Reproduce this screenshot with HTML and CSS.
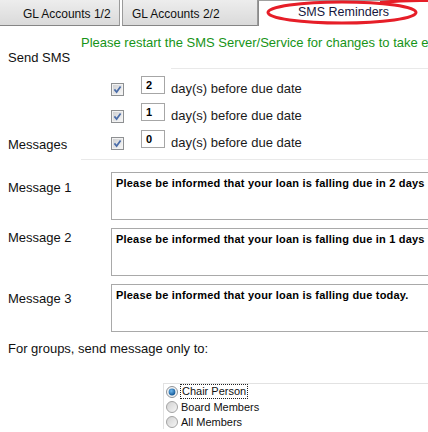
FILE: index.html
```html
<!DOCTYPE html>
<html lang="en">
<head>
<meta charset="UTF-8">
<meta name="viewport" content="width=device-width, initial-scale=1.0">
<title>SMS Reminders</title>
<link rel="stylesheet" href="styles.css">
</head>
<body>

<div class="tabs">
    <div class="tab tab-first">GL Accounts 1/2</div>
    <div class="tab tab-second">GL Accounts 2/2</div>
    <div class="tab tab-active">SMS Reminders</div>
    <!-- red marker drawn round the active tab -->
    <svg class="marker" width="166" height="27" viewBox="0 0 166 27">
        <ellipse cx="80" cy="12.5" rx="74" ry="10.5" fill="none" stroke="#e61e28" stroke-width="3"/>
        <path d="M118 2.5 Q142 0 166 0.5" fill="none" stroke="#e61e28" stroke-width="3"/>
    </svg>
</div>

<div class="notice">Please restart the SMS Server/Service for changes to take effect</div>

<div class="send-label">Send SMS</div>
<div class="rule rule-top"></div>

<div class="days">
    <div class="day-row">
        <div class="row-label"></div>
        <svg class="check" width="13" height="13" viewBox="0 0 13 13">
            <defs>
                <linearGradient id="boxFill" x1="0" y1="0" x2="1" y2="1">
                    <stop offset="0" stop-color="#cfd0d2"/>
                    <stop offset="1" stop-color="#f6f6f6"/>
                </linearGradient>
                <linearGradient id="radioFill" x1="0" y1="0" x2="1" y2="1">
                    <stop offset="0" stop-color="#cfcfcf"/>
                    <stop offset="1" stop-color="#f7f7f7"/>
                </linearGradient>
                <radialGradient id="dotFill" cx="0.4" cy="0.35" r="0.7">
                    <stop offset="0" stop-color="#6fb8ee"/>
                    <stop offset="1" stop-color="#0b4f8e"/>
                </radialGradient>
            </defs>
            <rect x="0.5" y="0.5" width="12" height="12" fill="#f2f2f2" stroke="#8e9092"/>
            <rect x="2" y="2" width="9" height="9" fill="url(#boxFill)"/>
            <path d="M3.4 6.4 L5.6 9 L9.6 3.4" fill="none" stroke="#4a6ca8" stroke-width="1.7"/>
        </svg>
        <input class="num" type="text" value="2">
        <span class="day-text">day(s) before due date</span>
    </div>
    <div class="day-row">
        <div class="row-label"></div>
        <svg class="check" width="13" height="13" viewBox="0 0 13 13">
            <rect x="0.5" y="0.5" width="12" height="12" fill="#f2f2f2" stroke="#8e9092"/>
            <rect x="2" y="2" width="9" height="9" fill="url(#boxFill)"/>
            <path d="M3.4 6.4 L5.6 9 L9.6 3.4" fill="none" stroke="#4a6ca8" stroke-width="1.7"/>
        </svg>
        <input class="num" type="text" value="1">
        <span class="day-text">day(s) before due date</span>
    </div>
    <div class="day-row">
        <div class="row-label"><span class="label-messages">Messages</span></div>
        <svg class="check" width="13" height="13" viewBox="0 0 13 13">
            <rect x="0.5" y="0.5" width="12" height="12" fill="#f2f2f2" stroke="#8e9092"/>
            <rect x="2" y="2" width="9" height="9" fill="url(#boxFill)"/>
            <path d="M3.4 6.4 L5.6 9 L9.6 3.4" fill="none" stroke="#4a6ca8" stroke-width="1.7"/>
        </svg>
        <input class="num" type="text" value="0">
        <span class="day-text">day(s) before due date</span>
    </div>
</div>
<div class="rule rule-bottom"></div>

<div class="messages">
    <div class="msg-row">
        <div class="msg-label">Message 1</div>
        <textarea class="msg-text">Please be informed that your loan is falling due in 2 days</textarea>
    </div>
    <div class="msg-row msg-row-second">
        <div class="msg-label">Message 2</div>
        <textarea class="msg-text">Please be informed that your loan is falling due in 1 days</textarea>
    </div>
    <div class="msg-row msg-row-third">
        <div class="msg-label">Message 3</div>
        <textarea class="msg-text">Please be informed that your loan is falling due today.</textarea>
    </div>
</div>

<div class="groups">For groups, send message only to:</div>

<div class="radio-box">
    <div class="radio-row">
        <svg class="radio" width="12" height="12" viewBox="0 0 12 12">
            <circle cx="6" cy="6" r="5.5" fill="#f4f4f4" stroke="#8f9499"/>
            <circle cx="6" cy="6" r="3.4" fill="url(#dotFill)"/>
        </svg>
        <span class="focused">Chair Person</span>
    </div>
    <div class="radio-row">
        <svg class="radio" width="12" height="12" viewBox="0 0 12 12">
            <circle cx="6" cy="6" r="5.5" fill="url(#radioFill)" stroke="#a3a3a3"/>
        </svg>
        <span>Board Members</span>
    </div>
    <div class="radio-row">
        <svg class="radio" width="12" height="12" viewBox="0 0 12 12">
            <circle cx="6" cy="6" r="5.5" fill="url(#radioFill)" stroke="#a3a3a3"/>
        </svg>
        <span>All Members</span>
    </div>
</div>

</body>
</html>
```

FILE: styles.css
```css
/* page */
html, body {
    overflow: hidden;
}
body {
    margin: 0;
    width: 428px;
    height: 432px;
    font-family: "Liberation Sans", Arial, sans-serif;
    font-size: 13px;
    color: #111;
    background-color: #fff;
}

/* tabs along the top */
.tabs {
    display: flex;
    height: 26px;
    position: relative;
}
.tab {
    box-sizing: border-box;
    height: 26px;
    padding: 3px 0 0 23px;
    font-size: 12px;
    line-height: 22px;
    white-space: nowrap;
    background: linear-gradient(#ededed, #dadada);
    border-right: 1px solid #9a9a9a;
    border-bottom: 1px solid #858585;
}
.tab-first {
    width: 120px;
}
.tab-second {
    width: 136px;
    margin-left: 2px;
    padding-left: 9px;
    border-left: 1px solid #9a9a9a;
}
.tab-active {
    flex: 1;
    padding: 0;
    font-size: 12.5px;
    text-align: center;
    color: #16163c;
    background: #fff;
    border: none;
    border-left: 1px solid #8a8a8a;
    border-top: 1px solid #a0a0a0;
}
.marker {
    position: absolute;
    left: 262px;
    top: 0;
}

.notice {
    margin: 10px 0 0 81px;
    line-height: 14px;
    white-space: nowrap;
    color: #179417;
}
.send-label {
    padding-left: 8px;
    line-height: 15px;
}

/* faint separators */
.rule {
    border-top: 1px solid #e9e9e9;
}
.rule-top {
    margin: 3px 0 0 171px;
}
.rule-bottom {
    margin: 2px 0 0 81px;
}

/* reminder day rows */
.days {
    margin-top: 7px;
}
.day-row {
    display: flex;
    align-items: flex-start;
    height: 27px;
}
.row-label {
    flex: none;
    width: 111px;
    box-sizing: border-box;
    padding-left: 8px;
}
.label-messages {
    display: block;
    margin-top: 7px;
    line-height: 15px;
}
.check {
    flex: none;
    margin-top: 7px;
}
.num {
    box-sizing: border-box;
    width: 24px;
    height: 18px;
    margin: 0 0 0 17px;
    padding: 0 0 0 4px;
    border: 1px solid #a6a6a6;
    font-family: "Liberation Sans", Arial, sans-serif;
    font-size: 11px;
    font-weight: bold;
    color: #000;
}
.day-text {
    margin: 5px 0 0 6px;
    line-height: 15px;
    white-space: nowrap;
    color: #1a1a1a;
}

/* message boxes */
.messages {
    margin-top: 12px;
}
.msg-row {
    display: flex;
    margin-bottom: 8px;
}
.msg-row-third {
    margin-bottom: 0;
}
.msg-label {
    flex: none;
    width: 111px;
    box-sizing: border-box;
    padding: 8px 0 0 8px;
    line-height: 15px;
}
.msg-row-second .msg-label {
    padding-top: 2px;
}
.msg-row-third .msg-label {
    padding-top: 7px;
}
.msg-text {
    flex: none;
    box-sizing: border-box;
    width: 360px;
    height: 48px;
    margin: 0;
    padding: 3px 4px;
    border: 1px solid #a9a9a9;
    font-family: "Liberation Sans", Arial, sans-serif;
    font-size: 11px;
    font-weight: bold;
    letter-spacing: 0.2px;
    line-height: 14px;
    color: #000;
    resize: none;
    overflow: hidden;
    white-space: nowrap;
}

/* group recipients */
.groups {
    margin-top: 9px;
    padding-left: 8px;
    line-height: 15px;
}
.radio-box {
    margin: 27px 0 0 163px;
    padding-left: 2px;
    border-top: 1px solid #e2e2e2;
    border-left: 1px solid #e2e2e2;
}
.radio-row {
    display: flex;
    align-items: center;
    height: 15px;
    font-size: 11px;
    color: #111;
}
.radio {
    flex: none;
    margin-right: 3px;
}
.focused {
    outline: 1px dotted #222;
    padding: 0 1px;
    line-height: 13px;
}
```
